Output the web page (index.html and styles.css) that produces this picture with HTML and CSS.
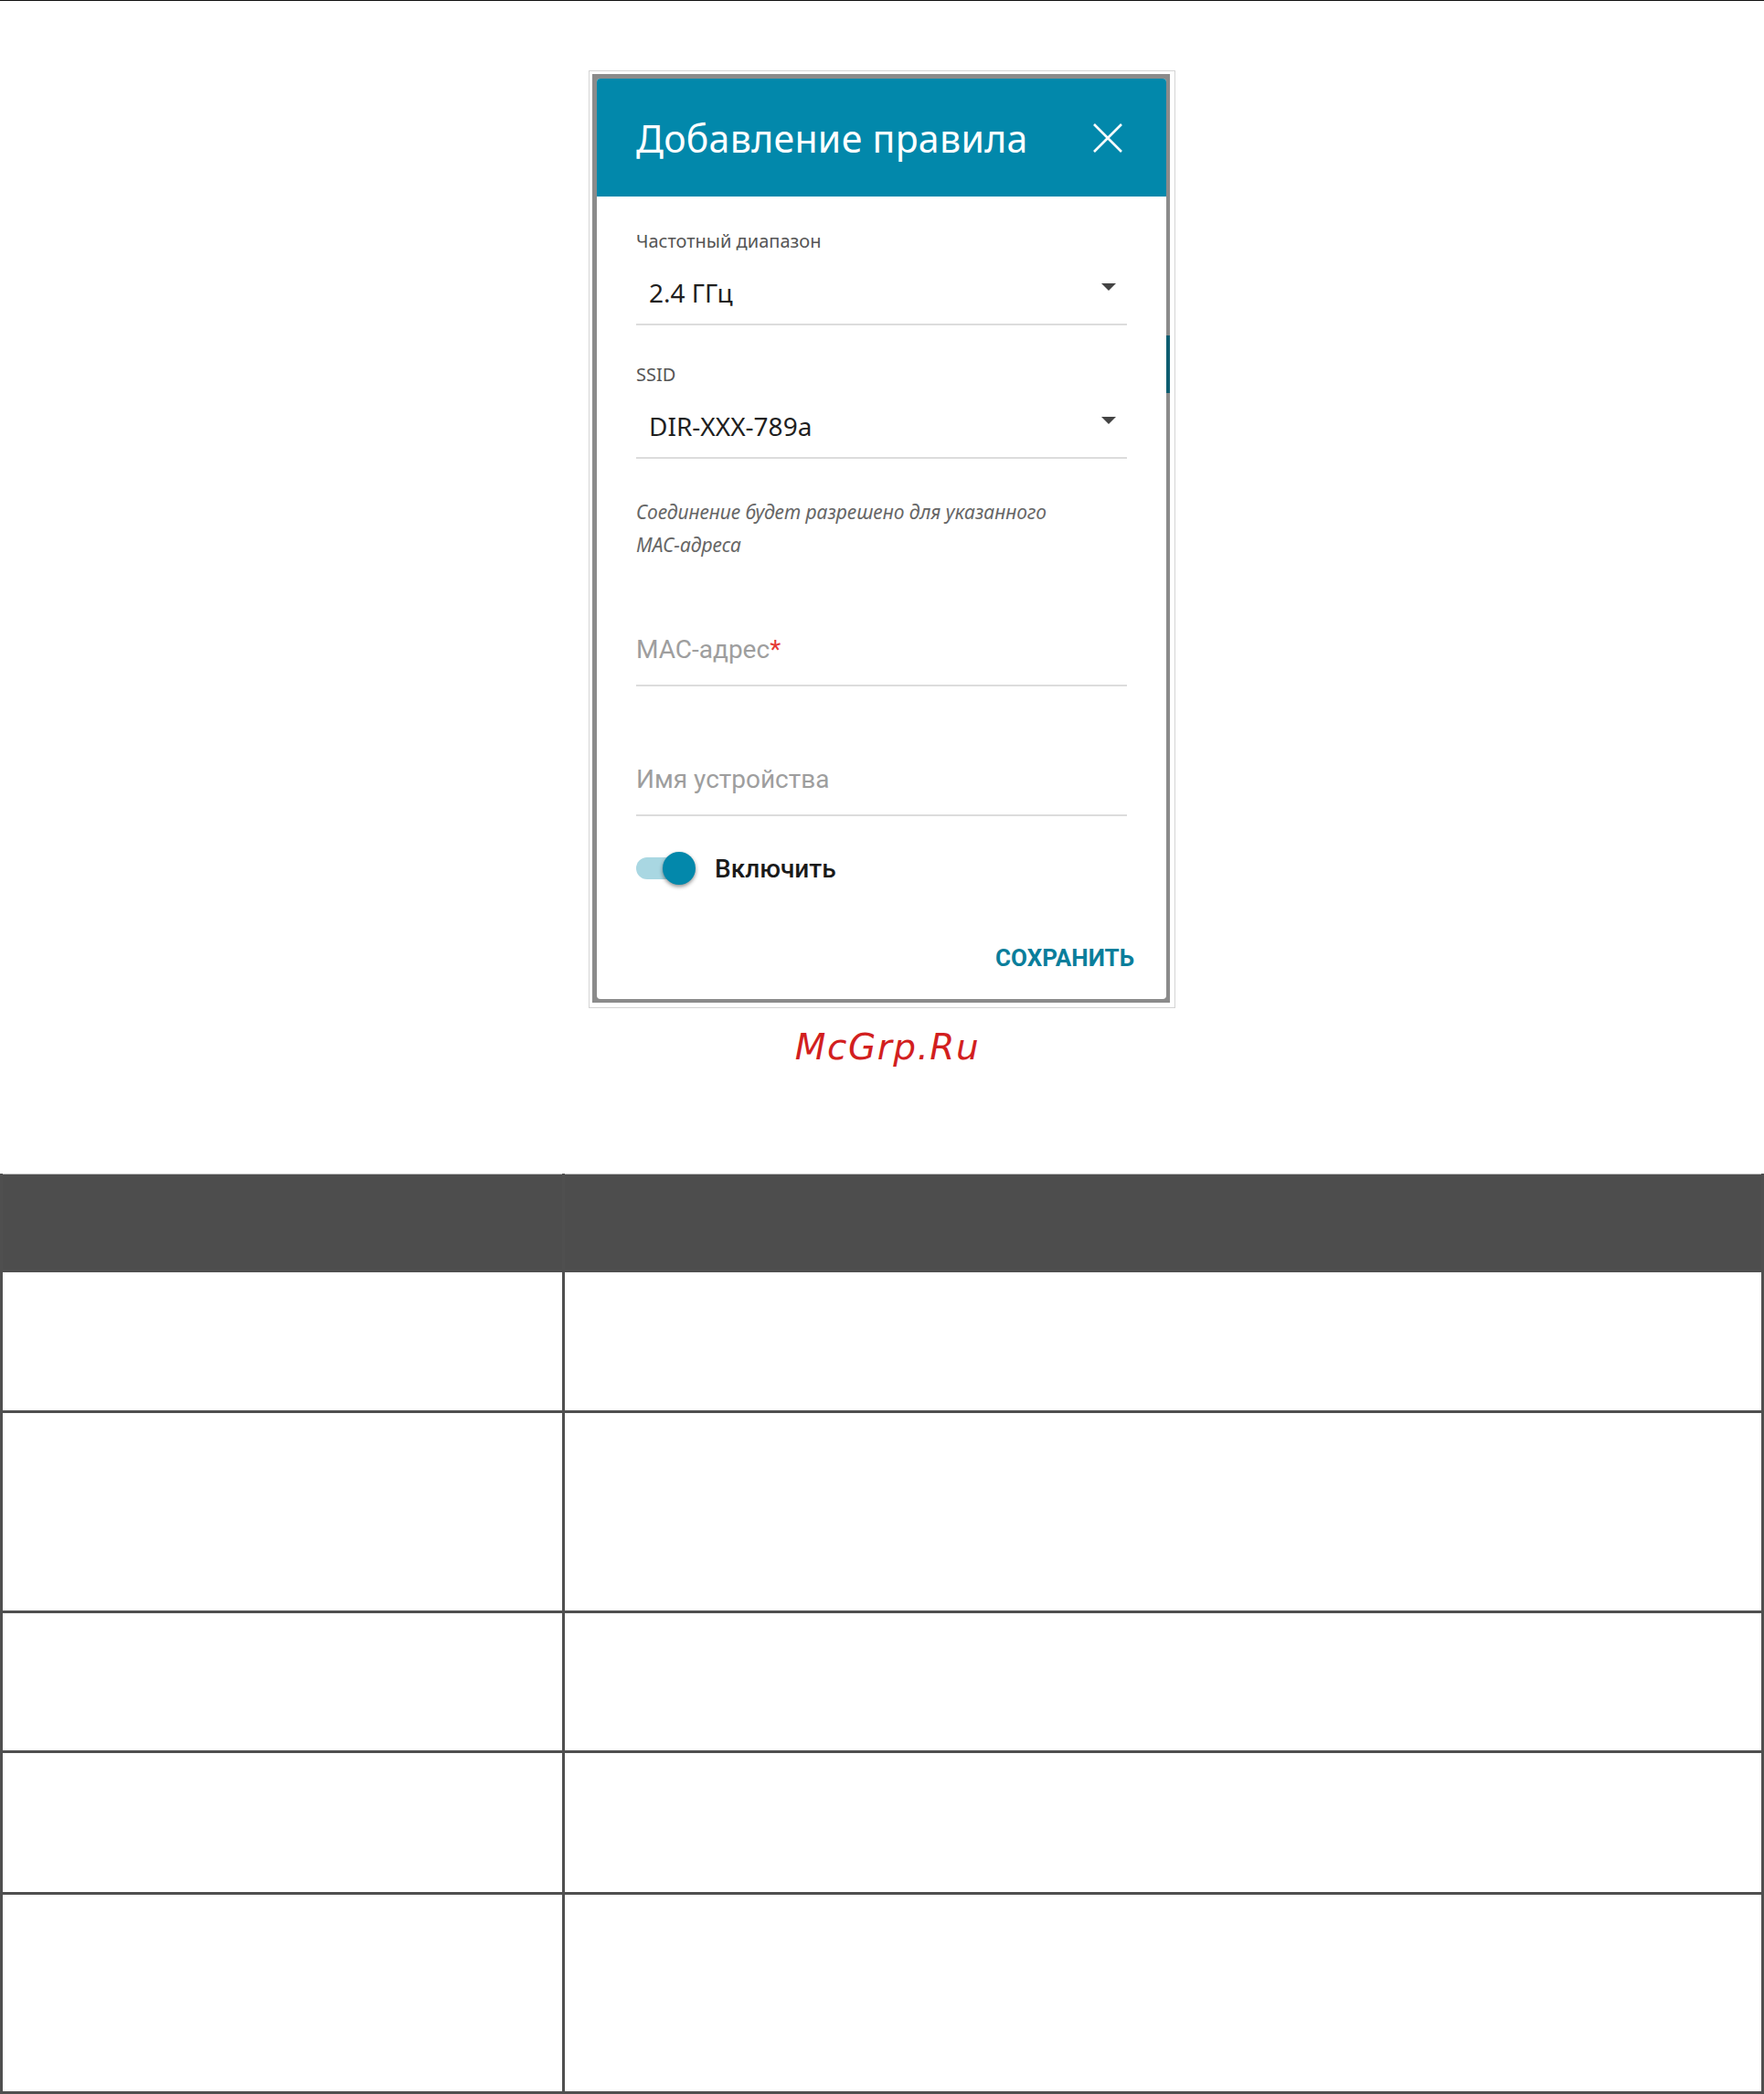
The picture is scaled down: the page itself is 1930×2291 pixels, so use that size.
FILE: index.html
```html
<!DOCTYPE html>
<html lang="ru">
<head>
    <meta charset="UTF-8">
    <title>Добавление правила</title>
    <link rel="stylesheet" href="styles.css">
</head>
<body>
<div class="top-rule"></div>

<div class="shot">
  <div class="backdrop">
    <div class="dialog">
      <div class="dialog-head">
        <h1 class="dialog-title">Добавление правила</h1>
        <svg class="close" width="34" height="34" viewBox="0 0 34 34">
          <path d="M2 2 L32 32 M32 2 L2 32" stroke="#fff" stroke-width="2.6" fill="none"/>
        </svg>
      </div>
      <div class="dialog-body">
        <div class="select">
          <div class="select-label">Частотный диапазон</div>
          <div class="select-value">
            <span>2.4 ГГц</span>
            <i class="caret"></i>
          </div>
        </div>
        <div class="select second">
          <div class="select-label">SSID</div>
          <div class="select-value">
            <span>DIR-XXX-789a</span>
            <i class="caret"></i>
          </div>
        </div>
        <p class="hint">Соединение будет разрешено для указанного<br>MAC-адреса</p>
        <div class="input mac">MAC-адрес<span class="req">*</span></div>
        <div class="input name">Имя устройства</div>
        <div class="switch-row">
          <div class="switch"><span class="knob"></span></div>
          <span class="switch-label">Включить</span>
        </div>
        <div class="actions">
          <span class="save">СОХРАНИТЬ</span>
        </div>
      </div>
    </div>
  </div>
</div>

<div class="mark">McGrp.Ru</div>

<table class="params">
  <tr class="head"><th class="c1"></th><th></th></tr>
  <tr class="r1"><td class="c1"></td><td></td></tr>
  <tr class="r2"><td class="c1"></td><td></td></tr>
  <tr class="r3"><td class="c1"></td><td></td></tr>
  <tr class="r4"><td class="c1"></td><td></td></tr>
  <tr class="r5"><td class="c1"></td><td></td></tr>
</table>
</body>
</html>
```

FILE: styles.css
```css
body {
    margin: 0;
    background: #fff;
    font-family: "Noto Sans", "Open Sans", sans-serif;
}

.top-rule {
    height: 1px;
    background: #111;
}

/* screenshot frame */
.shot {
    width: 632px;
    margin: 76px auto 0;
    border: 1px solid #d4d4d4;
    padding: 3px 5px 5px 3px;
}
.backdrop {
    /* the page under the modal shows through at the right edge */
    background: linear-gradient(#0d5d70, #0d5d70) right 286px / 4px 63px no-repeat, #8b8b8b;
    padding: 5px 4px 4px 5px;
}

.dialog {
    background: #fff;
    border-radius: 4px;
    overflow: hidden;
}

.dialog-head {
    height: 129px;
    background: #0288ab;
    display: flex;
    align-items: center;
    justify-content: space-between;
    padding: 0 47px 0 43px;
}
.dialog-title {
    margin: 0;
    font-weight: 400;
    font-size: 41px;
    color: #fff;
    letter-spacing: 0.3px;
}

.dialog-body {
    padding: 35px 43px 27px;
}

.select {
    border-bottom: 2px solid #dcdcdc;
    padding-bottom: 14px;
}
.select.second {
    margin-top: 40px;
}
.select-label {
    font-size: 20px;
    line-height: 28px;
    color: #555;
}
.select-value {
    margin-top: 22px;
    height: 40px;
    padding: 0 12px 0 14px;
    display: flex;
    align-items: center;
    justify-content: space-between;
    font-size: 28px;
    color: #1f1f1f;
}
.caret {
    width: 0;
    height: 0;
    border-left: 8px solid transparent;
    border-right: 8px solid transparent;
    border-top: 8px solid #444;
    margin-top: -12px;
}

.hint {
    margin: 40px 0 0;
    font-size: 21px;
    line-height: 36px;
    font-style: italic;
    color: #666;
}

.input {
    font-family: Roboto, "Liberation Sans", sans-serif;
    font-size: 28px;
    line-height: 40px;
    color: #9e9e9e;
    padding-bottom: 18px;
    border-bottom: 2px solid #dcdcdc;
}
.input.mac {
    margin-top: 77px;
}
.input.name {
    margin-top: 82px;
}
.req {
    color: #e53935;
}

.switch-row {
    margin-top: 39px;
    height: 36px;
    display: flex;
    align-items: center;
}
.switch {
    position: relative;
    width: 62px;
    height: 24px;
    border-radius: 12px;
    background: #a9d7e2;
}
.knob {
    position: absolute;
    right: -3px;
    top: -6px;
    width: 36px;
    height: 36px;
    border-radius: 50%;
    background: #0388ab;
    box-shadow: 0 2px 4px rgba(0, 0, 0, 0.45);
}
.switch-label {
    margin-left: 24px;
    font-family: Roboto, "Liberation Sans", sans-serif;
    font-weight: 500;
    font-size: 28px;
    color: #1a1a1a;
}

.actions {
    margin-top: 62px;
    margin-right: -8px;
    display: flex;
    justify-content: flex-end;
}
.save {
    font-family: Roboto, "Liberation Sans", sans-serif;
    font-weight: 700;
    font-size: 26px;
    line-height: 36px;
    color: #0a7e9b;
}

/* watermark */
.mark {
    margin-top: 19px;
    padding-left: 12px;
    text-align: center;
    font-family: "DejaVu Sans", sans-serif;
    font-style: italic;
    font-size: 39px;
    line-height: 48px;
    letter-spacing: 1.5px;
    color: #d21f1f;
}

/* parameters table */
.params {
    margin-top: 114px;
    width: 100%;
    border-collapse: collapse;
    border-top: 1px solid #bbb;
}
.params th,
.params td {
    padding: 0;
    border: 3px solid #4f4f4f;
}
.params th {
    background: #4d4d4d;
    border-top: 0;
    height: 104px;
}
.params .c1 {
    width: 612px;
}
.params .r1 td { height: 151px; }
.params .r2 td { height: 216px; }
.params .r3 td { height: 150px; }
.params .r4 td { height: 152px; }
.params .r5 td { height: 215px; }
```
